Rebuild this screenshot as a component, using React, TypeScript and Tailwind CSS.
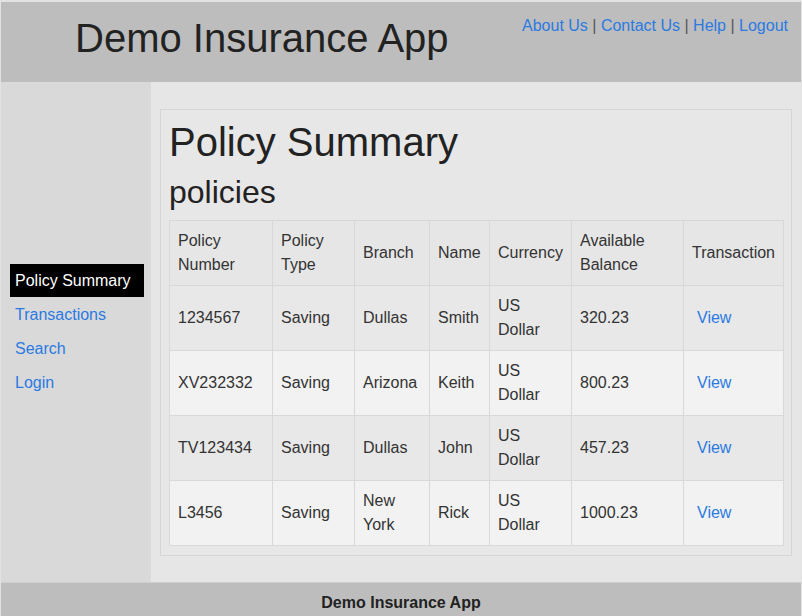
const rows = [
  { num: '1234567', type: 'Saving', branch: 'Dullas', name: 'Smith', currency: 'US Dollar', balance: '320.23' },
  { num: 'XV232332', type: 'Saving', branch: 'Arizona', name: 'Keith', currency: 'US Dollar', balance: '800.23' },
  { num: 'TV123434', type: 'Saving', branch: 'Dullas', name: 'John', currency: 'US Dollar', balance: '457.23' },
  { num: 'L3456', type: 'Saving', branch: 'New York', name: 'Rick', currency: 'US Dollar', balance: '1000.23' },
]

const cell = 'border border-[#d8d8d8] px-2 py-2 align-middle font-normal text-left'

export default function App() {
  return (
    <div
      className="flex h-[616px] w-[802px] flex-col border-x border-t-2 border-[#e2e2e2] text-[16px] leading-[24px] text-[#333]"
      style={{ fontFamily: '"Liberation Sans", Arial, sans-serif' }}
    >
      {/* Header */}
      <header className="flex h-[80px] shrink-0 items-start justify-between bg-[#bdbdbd]">
        <h1 className="ml-[74px] mt-[14px] text-[40px] leading-[44px] font-normal text-[#222]">
          Demo Insurance App
        </h1>
        <nav className="mr-[13px] mt-[12px] text-[#2a7ae2]">
          <a href="#">About Us</a> <span className="text-[#555]">|</span>{' '}
          <a href="#">Contact Us</a> <span className="text-[#555]">|</span>{' '}
          <a href="#">Help</a> <span className="text-[#555]">|</span>{' '}
          <a href="#">Logout</a>
        </nav>
      </header>

      <div className="flex flex-1">
        {/* Sidebar */}
        <aside className="flex w-[150px] shrink-0 flex-col justify-center bg-[#d9d9d9] pb-[2px] pl-[9px] pr-[7px]">
          <a href="#" className="block h-[33px] bg-black pl-[5px] leading-[33px] text-white">
            Policy Summary
          </a>
          {['Transactions', 'Search', 'Login'].map((l) => (
            <a key={l} href="#" className="block h-[34px] pl-[5px] leading-[36px] text-[#2a7ae2]">
              {l}
            </a>
          ))}
        </aside>

        {/* Main */}
        <main className="flex flex-1 items-center bg-[#e6e6e6] px-[9px]">
          <div className="w-[632px] border border-[#d6d6d6] bg-[#e7e7e7] px-2 pb-[9px] pt-[10px]">
            <h1 className="text-[40px] leading-[44px] font-normal text-[#222]">Policy Summary</h1>
            <h2 className="mt-[10px] text-[32px] leading-[36px] font-normal text-[#222]">policies</h2>
            <table className="mt-[10px] w-[614px] table-fixed border-collapse">
              <colgroup>
                <col className="w-[103px]" />
                <col className="w-[82px]" />
                <col className="w-[75px]" />
                <col className="w-[60px]" />
                <col className="w-[82px]" />
                <col className="w-[112px]" />
                <col className="w-[100px]" />
              </colgroup>
              <thead>
                <tr className="bg-[#e6e6e6]">
                  <th className={cell}>Policy Number</th>
                  <th className={cell}>Policy Type</th>
                  <th className={cell}>Branch</th>
                  <th className={cell}>Name</th>
                  <th className={cell}>Currency</th>
                  <th className={cell}>Available Balance</th>
                  <th className={cell}>Transaction</th>
                </tr>
              </thead>
              <tbody>
                {rows.map((r, i) => (
                  <tr key={r.num} className={i % 2 === 0 ? 'h-[65px] bg-[#e8e8e8]' : 'h-[65px] bg-[#f2f2f2]'}>
                    <td className={cell}>{r.num}</td>
                    <td className={cell}>{r.type}</td>
                    <td className={cell}>{r.branch}</td>
                    <td className={cell}>{r.name}</td>
                    <td className={cell}>{r.currency}</td>
                    <td className={cell}>{r.balance}</td>
                    <td className={cell + ' pl-[13px]'}>
                      <a href="#" className="text-[#2a7ae2]">View</a>
                    </td>
                  </tr>
                ))}
              </tbody>
            </table>
          </div>
        </main>
      </div>

      {/* Footer */}
      <footer className="flex h-[34px] shrink-0 items-center justify-center border-t border-[#cfcfcf] bg-[#bdbdbd] pt-[6px] font-bold text-[#222]">
        Demo Insurance App
      </footer>
    </div>
  )
}
